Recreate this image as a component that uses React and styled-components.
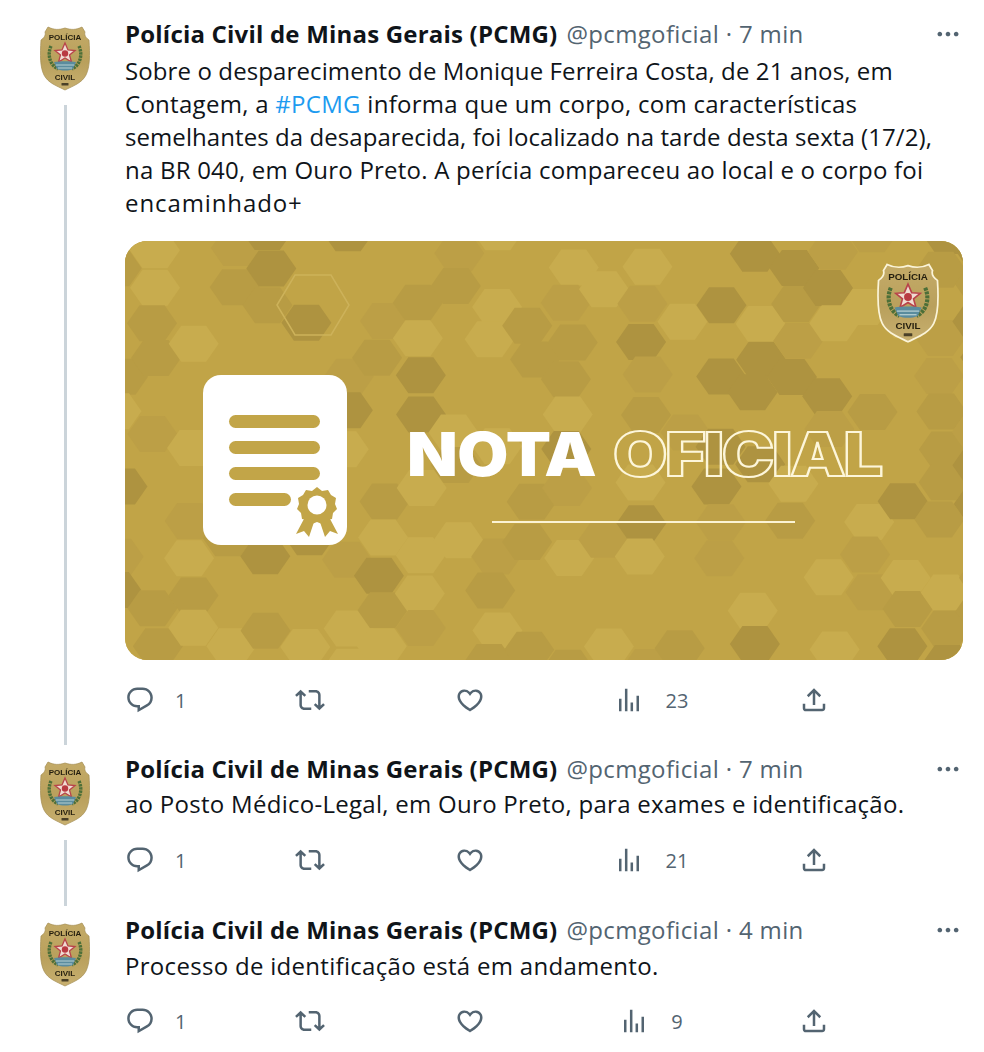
import React from "react"
import styled, { createGlobalStyle } from "styled-components"

const GlobalStyle = createGlobalStyle`
  html, body {
    margin: 0;
    padding: 0;
    background: #fff;
  }
  body {
    font-family: "Open Sans", "Noto Sans", "Liberation Sans", sans-serif;
    color: #0f1419;
  }
`

const Page = styled.div`
  width: 984px;
  height: 1052px;
  overflow: hidden;
  padding-top: 17px;
  box-sizing: border-box;
`

const Tweet = styled.article`
  display: flex;
  height: ${(p) => p.$height}px;
`

const Side = styled.div`
  width: 125px;
  flex: none;
  display: flex;
  flex-direction: column;
  align-items: center;
  padding: 8px 0 7px 5px;
  box-sizing: border-box;
`

const ThreadLine = styled.div`
  width: 3px;
  flex: 1;
  margin-top: 14px;
  background: #cbd4da;
`

const Content = styled.div`
  width: 838px;
  flex: none;
`

const Header = styled.header`
  display: flex;
  align-items: center;
  height: 33px;
  font-size: 24px;
  white-space: nowrap;
`

const Name = styled.span`
  font-weight: 700;
  letter-spacing: 0.2px;
`

const Handle = styled.span`
  color: #536471;
  margin-left: 9px;
  letter-spacing: 0.35px;
`

const More = styled.svg`
  width: 28px;
  height: 28px;
  margin-left: auto;
  margin-right: 1px;
  fill: #536471;
`

const Body = styled.div`
  margin-top: ${(p) => p.$top}px;
  font-size: 24px;
  line-height: 33px;
  white-space: nowrap;
`

// the original face is a touch wider on some words, so each line gets its own tracking
const Line = styled.p`
  margin: 0;
  letter-spacing: ${(p) => p.$track}px;
`

const Tag = styled.span`
  color: #1d9bf0;
`

const Banner = styled.div`
  display: grid;
  margin-top: 22px;
  height: 419px;
  border-radius: 22px;
  overflow: hidden;
  background: #c2a548;
  > * {
    grid-area: 1 / 1;
  }
`

const Art = styled.svg`
  width: 838px;
  height: 419px;
  display: block;
`

const Title = styled.div`
  align-self: start;
  justify-self: start;
  display: flex;
  align-items: center;
  margin: 185px 0 0 282px;
  height: 56px;
  font-family: Inter, "Liberation Sans", sans-serif;
  font-size: 60px;
  font-weight: 900;
  white-space: nowrap;
  color: #fff;
`

const TitleSolid = styled.span`
  display: inline-block;
  width: 188px;
  letter-spacing: -0.5px;
  transform-origin: left center;
  transform: scaleX(1.1);
`

const TitleOutline = styled.span`
  display: inline-block;
  margin-left: 18px;
  letter-spacing: -2px;
  color: transparent;
  -webkit-text-stroke: 2px #fdf6da;
  transform-origin: left center;
  transform: scaleX(1.17);
`

const Rule = styled.div`
  align-self: start;
  justify-self: start;
  width: 303px;
  height: 2px;
  margin: 280px 0 0 367px;
  background: #fbf3d4;
`

const BannerBadge = styled.div`
  align-self: start;
  justify-self: end;
  margin: 21px 24px 0 0;
`

const Actions = styled.footer`
  display: grid;
  grid-template-columns: 170px 160px 136px 120px 206px;
  align-items: center;
  height: 40px;
  margin-top: ${(p) => p.$top}px;
  color: #536471;
  font-size: 20px;
`

const Action = styled.div`
  display: flex;
  align-items: center;
  justify-content: ${(p) => (p.$centered ? "center" : "flex-start")};
  gap: ${(p) => p.$gap || 0}px;
`

const Count = styled.span`
  font-variant-numeric: lining-nums;
`

const ActionIcon = styled.svg`
  width: 30px;
  height: 30px;
  fill: #536471;
  flex: none;
`

const BadgeArt = styled.svg`
  display: block;
  filter: blur(0.35px);
`

const paths = {
  reply:
    "M1.751 10c0-4.42 3.584-8 8.005-8h4.366c4.49 0 8.129 3.64 8.129 8.13 0 2.96-1.607 5.68-4.196 7.11l-8.054 4.46v-3.69h-.067c-4.49.1-8.183-3.51-8.183-8.01zm8.005-6c-3.317 0-6.005 2.69-6.005 6 0 3.37 2.77 6.08 6.138 6.01l.351-.01h1.761v2.3l5.087-2.81c1.951-1.08 3.163-3.13 3.163-5.36 0-3.39-2.744-6.13-6.129-6.13H9.756z",
  retweet:
    "M4.5 3.88l4.432 4.14-1.364 1.46L5.5 7.55V16c0 1.1.896 2 2 2H13v2H7.5c-2.209 0-4-1.79-4-4V7.55L1.432 9.48.068 8.02 4.5 3.88zM16.5 6H11V4h5.5c2.209 0 4 1.79 4 4v8.45l2.068-1.93 1.364 1.46-4.432 4.14-4.432-4.14 1.364-1.46 2.068 1.93V8c0-1.1-.896-2-2-2z",
  like:
    "M16.697 5.5c-1.222-.06-2.679.51-3.89 2.16l-.805 1.09-.806-1.09C9.984 6.01 8.526 5.44 7.304 5.5c-1.243.07-2.349.78-2.91 1.91-.552 1.12-.633 2.78.479 4.82 1.074 1.97 3.257 4.27 7.129 6.61 3.87-2.34 6.052-4.64 7.126-6.61 1.111-2.04 1.03-3.7.477-4.82-.561-1.13-1.666-1.84-2.908-1.91zm4.187 7.69c-1.351 2.48-4.001 5.12-8.379 7.67l-.503.3-.504-.3c-4.379-2.55-7.029-5.19-8.382-7.67-1.36-2.5-1.41-4.86-.514-6.67.887-1.79 2.647-2.91 4.601-3.01 1.651-.09 3.368.56 4.798 2.01 1.429-1.45 3.146-2.1 4.796-2.01 1.954.1 3.714 1.22 4.601 3.01.896 1.81.846 4.17-.514 6.67z",
  views: "M8.75 21V3h2v18h-2zM18 21V8.5h2V21h-2zM4 21l.004-10h2L6 21H4zm9.248 0v-7h2v7h-2z",
  share:
    "M12 2.59l5.7 5.7-1.41 1.42L13 6.41V16h-2V6.41l-3.3 3.3-1.41-1.42L12 2.59zM21 15l-.02 3.51c0 1.38-1.12 2.49-2.5 2.49H5.5C4.11 21 3 19.88 3 18.5V15h2v3.5c0 .28.22.5.5.5h12.98c.28 0 .5-.22.5-.5L19 15h2z",
  more: "M3 12c0-1.1.9-2 2-2s2 .9 2 2-.9 2-2 2-2-.9-2-2zm9 2c1.1 0 2-.9 2-2s-.9-2-2-2-2 .9-2 2 .9 2 2 2zm7 0c1.1 0 2-.9 2-2s-.9-2-2-2-2 .9-2 2 .9 2 2 2z",
}

const Icon = ({ name }) => (
  <ActionIcon viewBox="0 0 24 24">
    <path d={paths[name]} />
  </ActionIcon>
)

// police shield, also used in the corner of the banner
const Badge = ({ width, height, id, outlined }) => (
  <BadgeArt width={width} height={height} viewBox="0 0 50 66">
    <defs>
      <linearGradient id={id} x1="0" y1="0" x2="0" y2="1">
        <stop offset="0" stopColor="#c4ab68" />
        <stop offset="0.55" stopColor="#b9a05c" />
        <stop offset="1" stopColor="#c8b070" />
      </linearGradient>
    </defs>
    <path
      d="M8 2C14 5 19 5 25 3C31 5 36 5 42 2L45 7C44 10 46 13 49 15C50 30 50 42 46 50C42 58 33 61 25 65C17 61 8 58 4 50C0 42 0 30 1 15C4 13 6 10 5 7Z"
      fill={`url(#${id})`}
      stroke={outlined ? "#fbf4d8" : "#a38c52"}
      strokeWidth={outlined ? 1.4 : 0.7}
    />
    <text x="25" y="15" textAnchor="middle" fontFamily="Liberation Sans, sans-serif" fontWeight="700" fontSize="8" fill="#241e0e">
      POLÍCIA
    </text>
    <path d="M11 21C7 30 10 40 18 44M39 21C43 30 40 40 32 44" fill="none" stroke="#4c6f38" strokeWidth="3.4" strokeDasharray="2.4 0.8" />
    <path d="M25 18L28 25L35 25.500L29.500 30L31.500 37L25 33L18.500 37L20.500 30L15 25.500L22 25Z" fill="#f0dcd2" stroke="#b8434a" strokeWidth="1.300" />
    <circle cx="25" cy="28.500" r="3.200" fill="#b93a42" />
    <path d="M14 37C20 36 30 36 36 37L33 44C28 46 22 46 17 44Z" fill="#5a8c9e" />
    <path d="M16 40H34M18 43H32" stroke="#cfe2e0" strokeWidth="0.800" />
    <text x="25" y="54.500" textAnchor="middle" fontFamily="Liberation Sans, sans-serif" fontWeight="700" fontSize="8" fill="#241e0e">
      CIVIL
    </text>
    <rect x="21.500" y="58" width="7" height="2.500" rx="0.500" fill="#4a4028" />
  </BadgeArt>
)

// seeded so the honeycomb is the same on every render
const buildHexes = () => {
  let seed = 42
  const random = () => {
    seed = (seed * 16807) % 2147483647
    return seed / 2147483647
  }
  const w = 50
  const h = 36
  const list = []
  for (let col = 0; col < 24; col++) {
    for (let row = 0; row < 13; row++) {
      const cx = col * w * 0.75 - 6 + (random() - 0.5) * 10
      const cy = row * h + (col % 2 ? h / 2 : 0) - 8 + (random() - 0.5) * 6
      const r = random()
      let fill = null
      if (r < 0.12) fill = "#ae9340"
      else if (r < 0.26) fill = "#b89c44"
      else if (r < 0.42) fill = "#c8ac4e"
      else if (r < 0.5) fill = "#bc9f46"
      if (!fill) continue
      const points = [
        [cx - w / 2, cy],
        [cx - w / 4, cy - h / 2],
        [cx + w / 4, cy - h / 2],
        [cx + w / 2, cy],
        [cx + w / 4, cy + h / 2],
        [cx - w / 4, cy + h / 2],
      ]
      list.push({ key: `${col}-${row}`, fill, points: points.map((p) => p.join(",")).join(" ") })
    }
  }
  return list
}

const hexes = buildHexes()

const BannerArt = () => (
  <Art viewBox="0 0 838 419">
    <rect width="838" height="419" fill="#c1a447" />
    {hexes.map((hex) => (
      <polygon key={hex.key} points={hex.points} fill={hex.fill} />
    ))}
    <polygon points="152,64 170,34 206,34 224,64 206,94 170,94" fill="none" stroke="#cdb25a" strokeWidth="1.500" />
    <rect x="78" y="134" width="144" height="170" rx="18" fill="#fff" />
    <g fill="#c2a548">
      <rect x="104" y="174" width="91" height="13" rx="6.500" />
      <rect x="104" y="200" width="91" height="13" rx="6.500" />
      <rect x="104" y="226" width="91" height="13" rx="6.500" />
      <rect x="104" y="252" width="62" height="13" rx="6.500" />
      <path d="M180 276L171 293L179 290L184 296L189 281ZM195 281L200 296L205 290L213 293L204 276Z" />
      <path d="M192 246L197 250L203 249L206 254L211 257L210 263L212 268L208 272L207 278L201 279L197 283L192 281L187 283L183 279L177 278L176 272L172 268L174 263L173 257L178 254L181 249L187 250Z" />
    </g>
    <circle cx="192" cy="264" r="9.500" fill="#fff" />
  </Art>
)

const TweetRow = ({ height, line, topGap, views, handleTime, children, id }) => (
  <Tweet $height={height}>
    <Side>
      <Badge width={50} height={66} id={id} />
      {line && <ThreadLine />}
    </Side>
    <Content>
      <Header>
        <Name>Polícia Civil de Minas Gerais (PCMG)</Name>
        <Handle>@pcmgoficial · {handleTime}</Handle>
        <More viewBox="0 0 24 24">
          <path d={paths.more} />
        </More>
      </Header>
      {children}
      <Actions $top={topGap}>
        <Action $gap={20}>
          <Icon name="reply" />
          <Count>1</Count>
        </Action>
        <Action>
          <Icon name="retweet" />
        </Action>
        <Action>
          <Icon name="like" />
        </Action>
        <Action $centered $gap={22}>
          <Icon name="views" />
          <Count>{views}</Count>
        </Action>
        <Action $centered>
          <Icon name="share" />
        </Action>
      </Actions>
    </Content>
  </Tweet>
)

export default function App() {
  return (
    <Page>
      <GlobalStyle />
      <TweetRow id="badge-a" height={735} line topGap={20} views="23" handleTime="7 min">
        <Body $top={4}>
          <Line $track={0.11}>Sobre o desparecimento de Monique Ferreira Costa, de 21 anos, em</Line>
          <Line $track={0.28}>
            Contagem, a <Tag>#PCMG</Tag> informa que um corpo, com características
          </Line>
          <Line $track={0.07}>semelhantes da desaparecida, foi localizado na tarde desta sexta (17/2),</Line>
          <Line $track={0.22}>na BR 040, em Ouro Preto. A perícia compareceu ao local e o corpo foi</Line>
          <Line $track={0.9}>encaminhado+</Line>
        </Body>
        <Banner>
          <BannerArt />
          <Title>
            <TitleSolid>NOTA</TitleSolid>
            <TitleOutline>OFICIAL</TitleOutline>
          </Title>
          <Rule />
          <BannerBadge>
            <Badge width={62} height={81} id="badge-banner" outlined />
          </BannerBadge>
        </Banner>
      </TweetRow>
      <TweetRow id="badge-b" height={161} line topGap={20} views="21" handleTime="7 min">
        <Body $top={2}>
          <Line $track={0.28}>ao Posto Médico-Legal, em Ouro Preto, para exames e identificação.</Line>
        </Body>
      </TweetRow>
      <TweetRow id="badge-c" height={140} topGap={19} views="9" handleTime="4 min">
        <Body $top={3}>
          <Line $track={0.3}>Processo de identificação está em andamento.</Line>
        </Body>
      </TweetRow>
    </Page>
  )
}
